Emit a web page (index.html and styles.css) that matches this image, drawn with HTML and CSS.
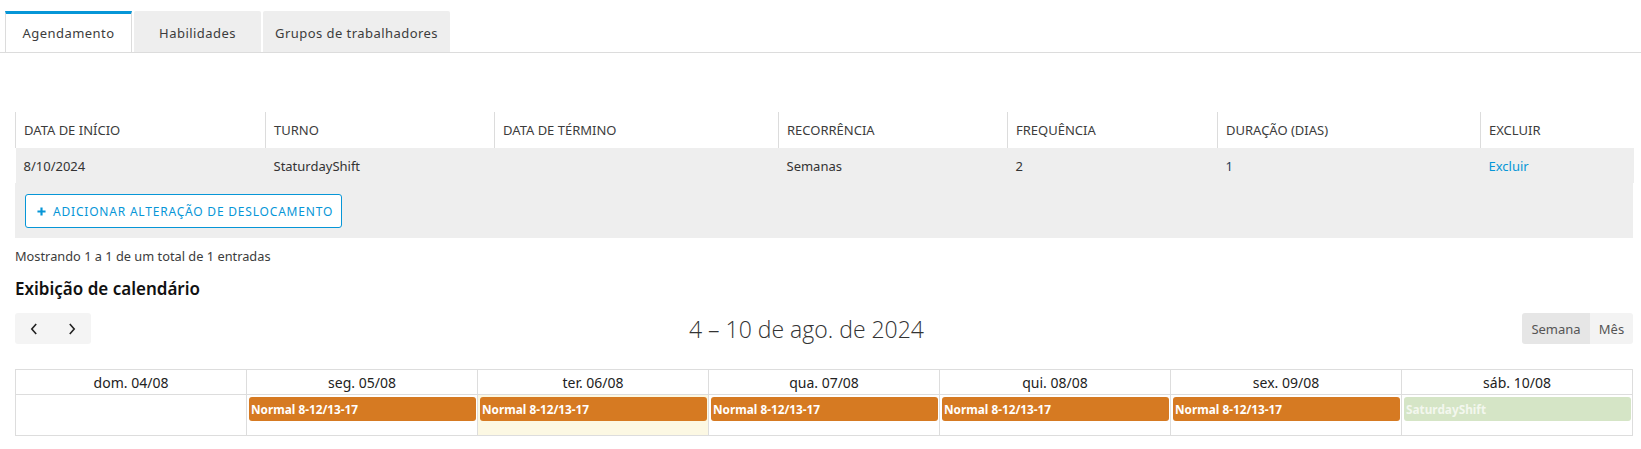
FILE: index.html
```html
<!DOCTYPE html>
<html lang="pt-BR">
<head>
<meta charset="utf-8">
<title>Agendamento</title>
<link rel="stylesheet" href="styles.css">
</head>
<body>
<nav class="tabs">
  <div class="tab tab-agenda active">Agendamento</div>
  <div class="tab tab-skills">Habilidades</div>
  <div class="tab tab-groups">Grupos de trabalhadores</div>
</nav>
<main class="content">
  <table class="grid">
    <colgroup>
      <col class="c1"><col class="c2"><col class="c3"><col class="c4"><col class="c5"><col class="c6"><col class="c7">
    </colgroup>
    <thead>
      <tr>
        <th>Data de início</th>
        <th>Turno</th>
        <th>Data de término</th>
        <th>Recorrência</th>
        <th>Frequência</th>
        <th>Duração (dias)</th>
        <th>Excluir</th>
      </tr>
    </thead>
    <tbody>
      <tr>
        <td>8/10/2024</td>
        <td>StaturdayShift</td>
        <td></td>
        <td>Semanas</td>
        <td>2</td>
        <td class="num">1</td>
        <td><a class="link" href="#">Excluir</a></td>
      </tr>
    </tbody>
  </table>
  <div class="grid-footer">
    <button class="add-btn" type="button">
      <svg class="plus" viewBox="0 0 10 10" width="9" height="9" aria-hidden="true"><path d="M5 0.5v9M0.5 5h9" stroke="currentColor" stroke-width="2.4"/></svg>
      <span>Adicionar alteração de deslocamento</span>
    </button>
  </div>
  <p class="info">Mostrando 1 a 1 de um total de 1 entradas</p>
  <h2 class="cal-heading">Exibição de calendário</h2>
  <div class="toolbar">
    <div class="nav-group">
      <button class="nav-btn" type="button" aria-label="Anterior">
        <svg viewBox="0 0 8 12" width="8" height="12"><path d="M6.2 1L1.8 6l4.4 5" fill="none" stroke="#222" stroke-width="1.6"/></svg>
      </button>
      <button class="nav-btn" type="button" aria-label="Próximo">
        <svg viewBox="0 0 8 12" width="8" height="12"><path d="M1.8 1l4.4 5-4.4 5" fill="none" stroke="#222" stroke-width="1.6"/></svg>
      </button>
    </div>
    <h3 class="range">4 – 10 de ago. de 2024</h3>
    <div class="view-group">
      <button class="view-btn selected" type="button">Semana</button>
      <button class="view-btn" type="button">Mês</button>
    </div>
  </div>
  <table class="cal">
    <thead>
      <tr>
        <th>dom. 04/08</th>
        <th>seg. 05/08</th>
        <th>ter. 06/08</th>
        <th>qua. 07/08</th>
        <th>qui. 08/08</th>
        <th>sex. 09/08</th>
        <th>sáb. 10/08</th>
      </tr>
    </thead>
    <tbody>
      <tr>
        <td></td>
        <td><div class="event">Normal 8-12/13-17</div></td>
        <td class="today"><div class="event">Normal 8-12/13-17</div></td>
        <td><div class="event">Normal 8-12/13-17</div></td>
        <td><div class="event">Normal 8-12/13-17</div></td>
        <td><div class="event">Normal 8-12/13-17</div></td>
        <td><div class="event event-sat">SaturdayShift</div></td>
      </tr>
    </tbody>
  </table>
</main>
</body>
</html>
```
FILE: styles.css
```css
* { box-sizing: border-box; }

body {
  margin: 0;
  background: #fff;
  color: #3c3c3c;
  font-family: "Noto Sans", "Open Sans", sans-serif;
  font-size: 13px;
}

/* Tabs */
.tabs {
  display: flex;
  gap: 2px;
  padding: 11px 0 0 5px;
  border-bottom: 1px solid #dcdcdc;
}
.tab {
  height: 41px;
  display: flex;
  align-items: center;
  justify-content: center;
  background: #eeeeee;
  border-radius: 2px 2px 0 0;
  font-size: 13px;
  letter-spacing: 0.45px;
  color: #3c3c3c;
  padding-top: 2px;
}
.tab-agenda { width: 127px; }
.tab-skills { width: 127px; }
.tab-groups { width: 187px; }
.tab.active {
  background: #fff;
  border-top: 3px solid #0696d7;
  border-left: 1px solid #dcdcdc;
  border-right: 1px solid #dcdcdc;
  border-radius: 0;
  padding-top: 0;
}

.content {
  padding: 0 8px 0 15px;
}

/* Grid */
.grid {
  width: 1618px;
  margin-top: 59px;
  border-collapse: collapse;
  table-layout: fixed;
}
.grid .c1 { width: 250px; }
.grid .c2 { width: 229px; }
.grid .c3 { width: 284px; }
.grid .c4 { width: 229px; }
.grid .c5 { width: 210px; }
.grid .c6 { width: 263px; }
.grid .c7 { width: 153px; }
.grid th {
  height: 36px;
  padding: 0 8px;
  text-align: left;
  font-weight: normal;
  text-transform: uppercase;
  font-size: 13px;
  color: #3c3c3c;
  border-left: 1px solid #dcdcdc;
  background: #fff;
}
.grid td {
  height: 35px;
  padding: 0 8px;
  background: #eeeeee;
  color: #333;
  font-size: 13px;
}
.grid td.num { color: #1f3e58; }
.link {
  color: #0696d7;
  text-decoration: none;
}

.grid-footer {
  width: 1618px;
  background: #eeeeee;
  padding: 11px 10px 10px;
}
.add-btn {
  display: flex;
  align-items: center;
  gap: 7px;
  width: 317px;
  height: 34px;
  padding: 0 0 0 11px;
  background: #fff;
  border: 1px solid #0696d7;
  border-radius: 3px;
  color: #0696d7;
  font-family: inherit;
  font-size: 12px;
  letter-spacing: 0.8px;
  text-transform: uppercase;
}

.info {
  margin: 9px 0 0;
  line-height: 18px;
  font-size: 12.8px;
  color: #3c3c3c;
}
.cal-heading {
  margin: 12px 0 0;
  font-size: 17px;
  line-height: 24px;
  font-weight: 600;
  color: #111;
}

/* Toolbar */
.toolbar {
  width: 1618px;
  margin-top: 12px;
  display: flex;
  align-items: center;
  justify-content: space-between;
  height: 31px;
}
.nav-group {
  display: flex;
  background: #f4f4f4;
  border-radius: 3px;
}
.nav-btn {
  width: 38px;
  height: 31px;
  border: 0;
  background: transparent;
  display: flex;
  align-items: center;
  justify-content: center;
  padding: 0;
}
.range {
  margin: 0;
  font-family: "Open Sans", "Noto Sans", sans-serif;
  font-weight: 300;
  font-size: 23px;
  color: #333;
}
.view-group {
  display: flex;
  border-radius: 3px;
  overflow: hidden;
}
.view-btn {
  height: 31px;
  border: 0;
  background: #f3f3f3;
  color: #555;
  font-family: inherit;
  font-size: 13px;
  padding: 0;
  width: 43px;
}
.view-btn.selected {
  background: #e6e6e6;
  width: 68px;
}

/* Calendar */
.cal {
  width: 1618px;
  margin-top: 25px;
  border-collapse: collapse;
  table-layout: fixed;
}
.cal th {
  height: 25px;
  border: 1px solid #dddddd;
  font-weight: normal;
  font-size: 14px;
  color: #222;
  padding: 0;
}
.cal td {
  height: 41px;
  border: 1px solid #dddddd;
  vertical-align: top;
  padding: 2px 1px 0 2px;
}
.cal td.today { background: #fcf8e3; }
.event {
  height: 24px;
  line-height: 24px;
  border-radius: 3px;
  background: #d67a22;
  color: #fff;
  font-size: 11.8px;
  font-weight: 700;
  padding-left: 2px;
  white-space: nowrap;
  overflow: hidden;
}
.event-sat {
  background: #d5e5c6;
  color: #f3f7ee;
}
```
